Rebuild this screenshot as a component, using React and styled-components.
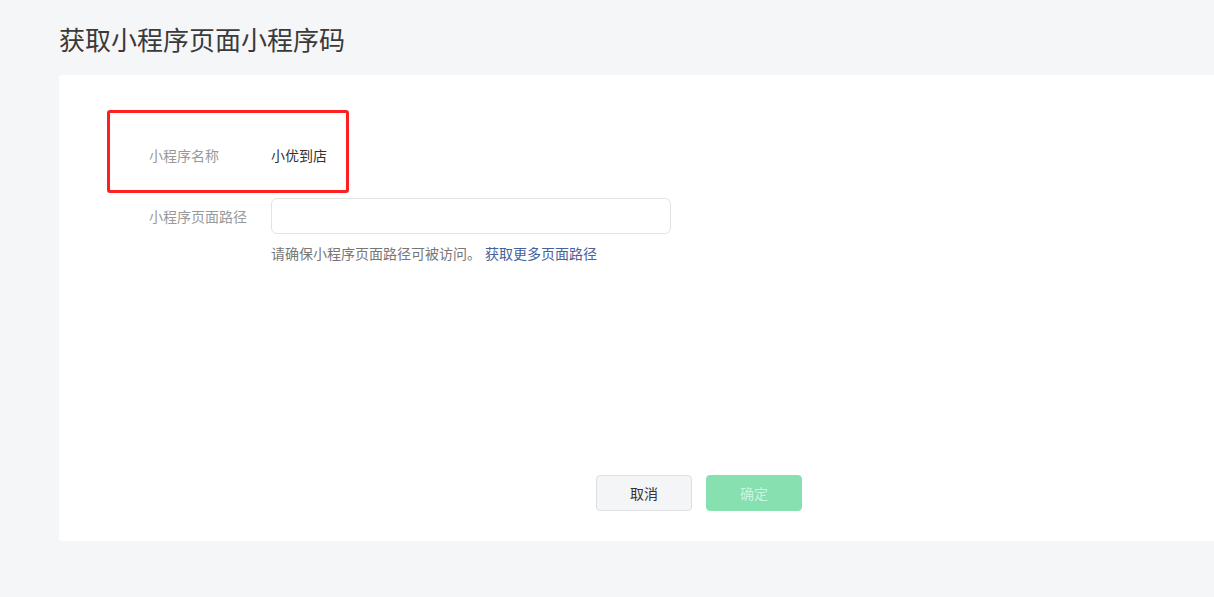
import React from "react";
import styled, { createGlobalStyle } from "styled-components";

const Global = createGlobalStyle`
  html, body {
    margin: 0;
    padding: 0;
    background: #f5f6f8;
    overflow: hidden;
    font-family: "Noto Sans CJK SC", "Noto Sans", sans-serif;
  }
`;

const Page = styled.div`
  padding: 21px 0 0 59px;
  width: 1280px;
`;

const Title = styled.h1`
  margin: 0;
  font-size: 26px;
  line-height: 36px;
  font-weight: 400;
  color: #3a3a3a;
`;

const Panel = styled.div`
  margin-top: 18px;
  width: 1280px;
  height: 466px;
  background: #fff;
  border-radius: 3px;
  display: flex;
  flex-direction: column;
  box-sizing: border-box;
  padding: 35px 0 30px;
`;

const Form = styled.div`
  flex: 1;
  display: flex;
  flex-direction: column;
`;

const Highlight = styled.div`
  margin-left: 48px;
  width: 242px;
  height: 83px;
  box-sizing: border-box;
  border: 3px solid #fe2020;
  border-radius: 3px;
  padding: 32px 0 0 39px;
`;

const Row = styled.div`
  display: flex;
  align-items: ${(p) => (p.$top ? "flex-start" : "center")};
  padding-left: ${(p) => p.$indent || 0}px;
  margin-top: ${(p) => p.$mt || 0}px;
`;

const Label = styled.div`
  width: 122px;
  flex: none;
  font-size: 14px;
  line-height: 20px;
  color: #999;
  white-space: nowrap;
  margin-top: ${(p) => p.$mt || 0}px;
`;

const Value = styled.div`
  font-size: 14px;
  line-height: 20px;
  color: #333;
  white-space: nowrap;
`;

const Field = styled.div`
  display: flex;
  flex-direction: column;
`;

const Input = styled.input`
  width: 400px;
  height: 36px;
  box-sizing: border-box;
  border: 1px solid #e2e3e6;
  border-radius: 6px;
  outline: none;
  padding: 0 12px;
  font-size: 14px;
  font-family: inherit;
`;

const Hint = styled.div`
  margin-top: 9px;
  font-size: 14px;
  line-height: 20px;
  color: #777;
  white-space: nowrap;
`;

const Link = styled.a`
  color: #46629a;
  text-decoration: none;
  margin-left: 4px;
`;

const Footer = styled.div`
  display: flex;
  justify-content: center;
  gap: 14px;
`;

const Button = styled.button`
  width: 96px;
  height: 36px;
  box-sizing: border-box;
  border-radius: 4px;
  font-size: 14px;
  font-family: inherit;
  cursor: pointer;
  border: 1px solid ${(p) => (p.$primary ? "#86e0b0" : "#dfe0e3")};
  background: ${(p) => (p.$primary ? "#86e0b0" : "#f4f5f7")};
  color: ${(p) => (p.$primary ? "#cdf4df" : "#333")};
`;

export default function App() {
  return (
    <>
      <Global />
      <Page>
        <Title>获取小程序页面小程序码</Title>
        <Panel>
          <Form>
            <Highlight>
              <Row>
                <Label>小程序名称</Label>
                <Value>小优到店</Value>
              </Row>
            </Highlight>
            <Row $indent={90} $mt={5} $top>
              <Label $mt={8}>小程序页面路径</Label>
              <Field>
                <Input />
                <Hint>
                  请确保小程序页面路径可被访问。
                  <Link href="#">获取更多页面路径</Link>
                </Hint>
              </Field>
            </Row>
          </Form>
          <Footer>
            <Button>取消</Button>
            <Button $primary disabled>确定</Button>
          </Footer>
        </Panel>
      </Page>
    </>
  );
}
